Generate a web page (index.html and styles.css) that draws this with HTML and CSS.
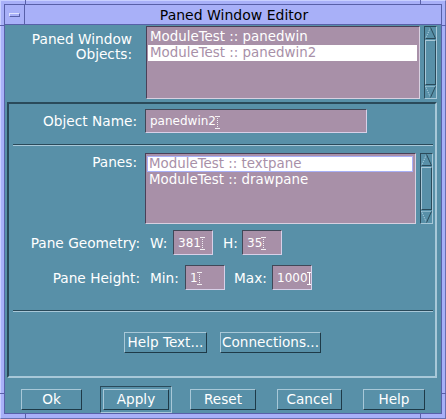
FILE: index.html
```html
<!DOCTYPE html>
<html>
<head>
<meta charset="utf-8">
<link rel="stylesheet" href="styles.css">
</head>
<body>
<div class="win">
  <span class="tick t-tl-v"></span><span class="tick t-tl-h"></span>
  <span class="tick t-tr-v"></span><span class="tick t-tr-h"></span>
  <span class="tick t-bl-v"></span><span class="tick t-bl-h"></span>
  <span class="tick t-br-v"></span><span class="tick t-br-h"></span>
  <div class="inner">
    <div class="titlebar">
      <div class="menubtn"><span></span></div>
      <div class="title">Paned Window Editor</div>
    </div>
    <div class="client">
      <div class="top">
        <div class="lbl two">Paned Window<br>Objects:</div>
        <div class="listwrap">
          <div class="list l1">
            <div class="item">ModuleTest :: panedwin</div>
            <div class="item sel">ModuleTest :: panedwin2</div>
          </div>
          <div class="sb">
            <svg class="arr" viewBox="0 0 11 12" width="11" height="12"><polyline points="0.5,11.5 5.5,0.5" stroke="#b8d8e8" stroke-dasharray="1 1" fill="none"/><polyline points="5.5,0.5 10.5,11.5" stroke="#2a4a5a" fill="none"/><line x1="0.5" y1="11.5" x2="10.5" y2="11.5" stroke="#2a4a5a"/></svg>
            <div class="slider"></div>
            <svg class="arr" viewBox="0 0 11 12" width="11" height="12"><line x1="0.5" y1="0.5" x2="10.5" y2="0.5" stroke="#b8d8e8" stroke-dasharray="1 1"/><polyline points="0.5,0.5 5.5,11.5" stroke="#b8d8e8" stroke-dasharray="1 1" fill="none"/><polyline points="5.5,11.5 10.5,0.5" stroke="#2a4a5a" fill="none"/></svg>
          </div>
        </div>
      </div>

      <div class="frame">
        <div class="row r-name">
          <div class="lbl w128">Object Name:</div>
          <div class="field f-name">panedwin2<span class="caret dot"></span></div>
        </div>
        <div class="sep"></div>
        <div class="row r-panes">
          <div class="lbl w128 tp">Panes:</div>
          <div class="listwrap lw2">
            <div class="list l2">
              <div class="item sel focus">ModuleTest :: textpane</div>
              <div class="item">ModuleTest :: drawpane</div>
            </div>
            <div class="sb">
              <svg class="arr" viewBox="0 0 11 12" width="11" height="12"><polyline points="0.5,11.5 5.5,0.5" stroke="#b8d8e8" stroke-dasharray="1 1" fill="none"/><polyline points="5.5,0.5 10.5,11.5" stroke="#2a4a5a" fill="none"/><line x1="0.5" y1="11.5" x2="10.5" y2="11.5" stroke="#2a4a5a"/></svg>
              <div class="slider"></div>
              <svg class="arr" viewBox="0 0 11 12" width="11" height="12"><line x1="0.5" y1="0.5" x2="10.5" y2="0.5" stroke="#b8d8e8" stroke-dasharray="1 1"/><polyline points="0.5,0.5 5.5,11.5" stroke="#b8d8e8" stroke-dasharray="1 1" fill="none"/><polyline points="5.5,11.5 10.5,0.5" stroke="#2a4a5a" fill="none"/></svg>
            </div>
          </div>
        </div>
        <div class="row r-geo">
          <div class="lbl w131">Pane Geometry:</div>
          <span class="sub s-w">W:</span>
          <div class="field f-small">381<span class="caret dot"></span></div>
          <span class="sub s-h">H:</span>
          <div class="field f-small">35<span class="caret dot"></span></div>
        </div>
        <div class="row r-ht">
          <div class="lbl w131">Pane Height:</div>
          <span class="sub s-min">Min:</span>
          <div class="field f-small">1<span class="caret dot"></span></div>
          <span class="sub s-max">Max:</span>
          <div class="field f-small">1000<span class="caret solid"></span></div>
        </div>
        <div class="sep sep2"></div>
        <div class="btnrow">
          <button class="btn b-help">Help Text...</button>
          <button class="btn b-conn">Connections...</button>
        </div>
      </div>

      <div class="actions">
        <button class="btn a-ok">Ok</button>
        <span class="defring"><button class="btn a-apply">Apply</button></span>
        <button class="btn a-reset">Reset</button>
        <button class="btn a-cancel">Cancel</button>
        <button class="btn a-help">Help</button>
      </div>
    </div>
  </div>
</div>
</body>
</html>
```

FILE: styles.css
```css
* { box-sizing: border-box; }
html, body { margin: 0; padding: 0; }
body {
  background: #a8b0f8;
  font-family: "DejaVu Sans", sans-serif;
  font-size: 13px;
  color: #ffffff;
}
.win {
  position: relative;
  width: 446px;
  height: 419px;
  border-top: 1px solid #c8d0ff;
  border-left: 1px solid #c8d0ff;
  border-right: 1px solid #6870b0;
  border-bottom: 1px solid #6870b0;
  padding: 3px 3px 4px 3px;
}
.tick { position: absolute; background: #5860a8; }
.t-tl-v { left: 24px; top: -1px; width: 1px; height: 5px; }
.t-tl-h { left: -1px; top: 24px; width: 5px; height: 1px; }
.t-tr-v { left: 419px; top: -1px; width: 1px; height: 5px; }
.t-tr-h { right: -1px; top: 24px; width: 5px; height: 1px; }
.t-bl-v { left: 24px; bottom: -1px; width: 1px; height: 5px; }
.t-bl-h { left: -1px; top: 392px; width: 5px; height: 1px; }
.t-br-v { left: 419px; bottom: -1px; width: 1px; height: 5px; }
.t-br-h { right: -1px; top: 392px; width: 5px; height: 1px; }

.inner {
  height: 100%;
  border: 1px solid #5860a8;
  display: flex;
  flex-direction: column;
}
.titlebar {
  height: 20px;
  display: flex;
  border-bottom: 1px solid #5860a8;
  background: #a8b0f8;
}
.menubtn {
  width: 20px;
  border-right: 1px solid #5860a8;
  display: flex;
  align-items: center;
  justify-content: center;
}
.menubtn span {
  width: 11px;
  height: 4px;
  border: 1px solid #5860a8;
  border-top-color: #e0e4ff;
  border-left-color: #e0e4ff;
  background: #a8b0f8;
}
.title {
  flex: 1;
  text-align: center;
  color: #000;
  font-size: 14px;
  line-height: 20px;
  padding-left: 2px;
}
.client {
  flex: 1;
  background: #5890a8;
  display: flex;
  flex-direction: column;
}

.top {
  height: 76px;
  display: flex;
  padding: 1px 4px 0 0;
}
.lbl { text-align: right; white-space: nowrap; font-size: 13.7px; }
.two { width: 127px; line-height: 15px; padding-top: 6px; margin-right: 14px; }

.listwrap { display: flex; flex: 1; height: 73px; }
.list {
  flex: 1;
  background: #a890a8;
  border-top: 1px solid #4a4058;
  border-left: 1px solid #4a4058;
  border-right: 1px solid #d8d0e0;
  border-bottom: 1px solid #d8d0e0;
  padding: 2px 2px 0 1px;
  margin-right: 4px;
}
.item {
  height: 16px;
  line-height: 16px;
  padding-left: 2px;
  color: #fff;
  white-space: nowrap;
  font-size: 13.4px;
}
.item.sel { background: #ffffff; color: #a890a8; }
.item.focus { border: 1px solid #a8b0f8; line-height: 14px; padding-left: 1px; }

.sb {
  width: 13px;
  border: 1px solid #2a4a5a;
  border-right-color: #a8c8d8;
  border-bottom-color: #a8c8d8;
  display: flex;
  flex-direction: column;
  align-items: center;
  background: #5890a8;
}
.arr { display: block; flex: none; margin: 0; }
.slider {
  flex: 1;
  width: 11px;
  margin: 1px 0;
  border: 1px solid #2a4a5a;
  border-top-color: #a8c8d8;
  border-left-color: #a8c8d8;
}

.frame {
  margin: 1px 4px 0 2px;
  height: 276px;
  border: 2px solid #2a4a5a;
  border-right-color: #a8c8d8;
  border-bottom-color: #a8c8d8;
  display: flex;
  flex-direction: column;
}
.row { display: flex; align-items: center; }
.w128 { width: 128px; margin-right: 8px; }
.w131 { width: 131px; }
.r-name { margin-top: 5px; height: 24px; }
.field {
  background: #a890a8;
  border-top: 1px solid #404858;
  border-left: 1px solid #404858;
  border-right: 1px solid #d8d0e8;
  border-bottom: 1px solid #d8d0e8;
  height: 24px;
  display: flex;
  align-items: center;
  padding-left: 4px;
  color: #fff;
  white-space: nowrap;
  font-size: 12px;
}
.f-name { width: 222px; }
.f-small { width: 40px; height: 25px; padding-left: 4px; }
.caret {
  display: inline-block;
  width: 5px;
  height: 13px;
  margin-left: -1px;
  position: relative;
  top: 1px;
}
.caret.dot {
  background:
    linear-gradient(#fff, #fff) 0 0 / 5px 1px no-repeat,
    linear-gradient(#fff, #fff) 0 100% / 5px 1px no-repeat,
    repeating-linear-gradient(#fff 0 1px, transparent 1px 2px) 2px 0 / 1px 100% no-repeat;
  opacity: 0.85;
}
.caret.solid {
  background:
    linear-gradient(#fff, #fff) 0 0 / 5px 1px no-repeat,
    linear-gradient(#fff, #fff) 0 100% / 5px 1px no-repeat,
    linear-gradient(#fff, #fff) 2px 0 / 1px 100% no-repeat;
}
.sep {
  margin: 11px 2px 0 4px;
  height: 2px;
  border-top: 1px solid #2a4a5a;
  border-bottom: 1px solid #a8c8d8;
}
.r-panes { margin-top: 7px; align-items: flex-start; height: 71px; }
.tp { padding-top: 1px; }
.lw2 { height: 71px; flex: none; width: 288px; }
.lw2 .list { margin-right: 4px; }
.r-geo { margin-top: 6px; height: 25px; }
.r-ht { margin-top: 10px; height: 25px; }
.sub { white-space: nowrap; font-size: 13.7px; flex: none; }
.s-w { margin-left: 10px; width: 23px; }
.s-h { margin-left: 10px; width: 19px; }
.s-min { margin-left: 10px; width: 35px; }
.s-max { margin-left: 9px; width: 38px; }
.sep2 { margin-top: 20px; }

.btn {
  font-family: "DejaVu Sans", sans-serif;
  font-size: 13.6px;
  color: #fff;
  background: #5890a8;
  border: 1px solid #1e3a48;
  border-top-color: #a8c8d8;
  border-left-color: #a8c8d8;
  height: 21px;
  padding: 0;
  margin: 0;
  line-height: 19px;
  white-space: nowrap;
}
.btnrow {
  margin-top: 20px;
  display: flex;
  justify-content: center;
  gap: 13px;
  padding-left: 1px;
}
.b-help { width: 83px; }
.b-conn { width: 101px; }

.actions {
  display: flex;
  align-items: center;
  padding-left: 16px;
  margin-top: 11px;
  gap: 21px;
}
.a-ok { width: 61px; }
.a-apply { width: 66px; }
.a-reset { width: 66px; }
.a-cancel { width: 65px; }
.a-help { width: 62px; }
.defring {
  margin: -3px;
  padding: 2px;
  border: 1px solid #2a4a5a;
  border-right-color: #a8c8d8;
  border-bottom-color: #a8c8d8;
  display: flex;
}
```
